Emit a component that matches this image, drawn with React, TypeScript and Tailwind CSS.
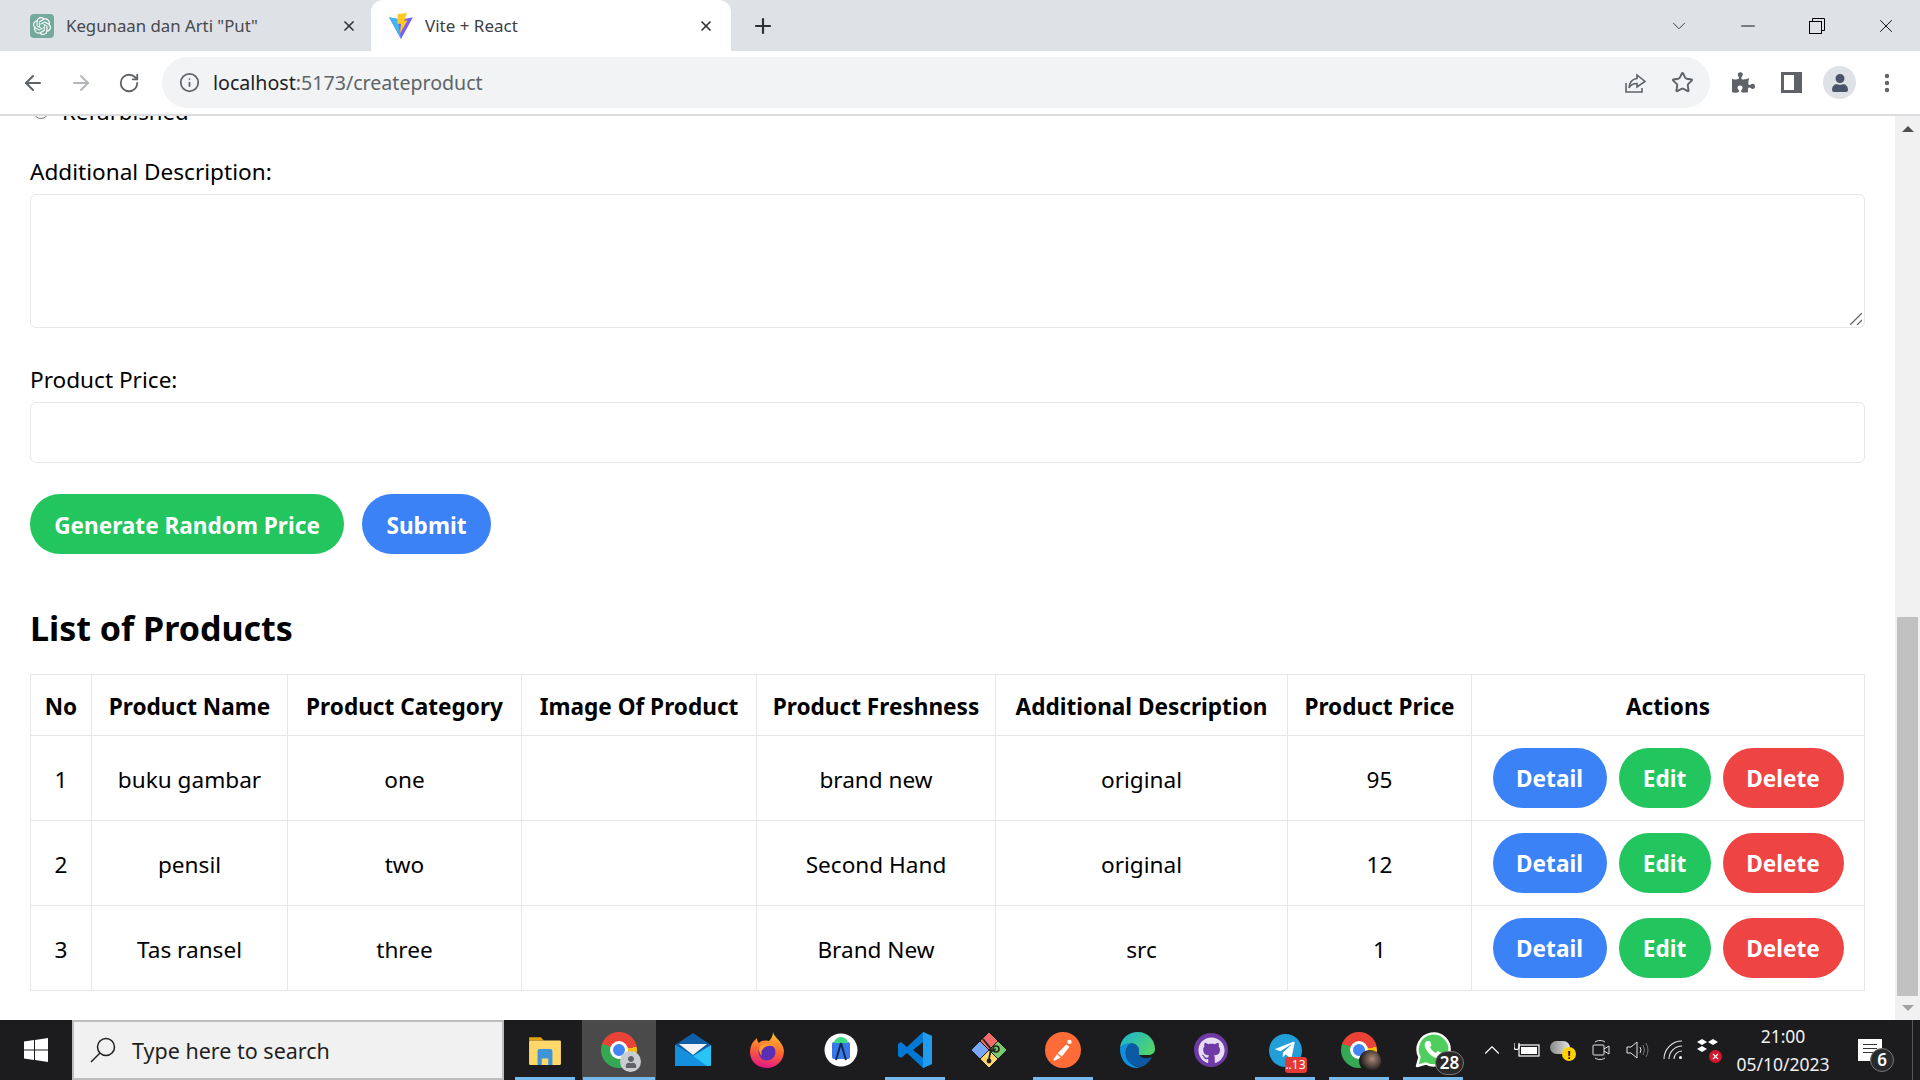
import {
  ArrowLeft,
  ArrowRight,
  ChevronDown,
  ChevronUp,
  EllipsisVertical,
  Info,
  Minus,
  Plus,
  RotateCw,
  Star,
  X,
} from 'lucide-react'
import { FaGithub, FaPuzzlePiece, FaTelegramPlane, FaUser } from 'react-icons/fa'
import { SiOpenai } from 'react-icons/si'

const font = "font-['Noto_Sans','Open_Sans',sans-serif]"

const products = [
  { no: 1, name: 'buku gambar', category: 'one', fresh: 'brand new', desc: 'original', price: 95 },
  { no: 2, name: 'pensil', category: 'two', fresh: 'Second Hand', desc: 'original', price: 12 },
  { no: 3, name: 'Tas ransel', category: 'three', fresh: 'Brand New', desc: 'src', price: 1 },
]

const headers = [
  'No',
  'Product Name',
  'Product Category',
  'Image Of Product',
  'Product Freshness',
  'Additional Description',
  'Product Price',
  'Actions',
]

const ViteLogo = () => (
  <svg viewBox="0 0 24 24" className="h-[26px] w-[26px]">
    <path d="M1 4 9 5.5 15 5.5 23 4 12 24Z" fill="#7c5cf6" />
    <path d="M1 4 9 5.5 12 24Z" fill="#41b6f5" />
    <path d="M9 1 17.5 0 15 7 18 7 11 19 12 10 8.5 10Z" fill="#ffc820" />
  </svg>
)

const ChromeLogo = () => (
  <div className="relative h-[36px] w-[36px] rounded-full bg-[conic-gradient(from_-70deg,#ea4335_0deg_150deg,#fbbc04_150deg_240deg,#34a853_240deg_360deg)]">
    <div className="absolute left-[9px] top-[9px] h-[18px] w-[18px] rounded-full border-[3px] border-white bg-[#4285f4]" />
  </div>
)

const TaskIcon = ({ active, selected, children }: { active?: boolean; selected?: boolean; children: React.ReactNode }) => (
  <div className={`relative flex h-[60px] w-[74px] items-center justify-center ${selected ? 'bg-[#4a4a4a]' : ''}`}>
    {children}
    {active && (
      <div className={`absolute bottom-0 h-[3px] bg-[#76b9ed] ${selected ? 'left-[1px] right-[1px]' : 'left-[7px] right-[7px]'}`} />
    )}
  </div>
)

function BrowserChrome() {
  return (
    <div className={`shrink-0 ${font}`}>
      <div className="flex h-[51px] items-center bg-[#dee1e6]">
        <div className="flex h-full w-[371px] items-center pl-[30px] pr-[14px]">
          <div className="flex h-[24px] w-[24px] items-center justify-center rounded-[4px] bg-[#74aa9c]">
            <SiOpenai className="h-[18px] w-[18px] text-white" />
          </div>
          <span className="ml-[12px] flex-1 text-[16.8px] text-[#45494d]">Kegunaan dan Arti "Put"</span>
          <X className="h-[16px] w-[16px] text-[#303134]" strokeWidth={2.5} />
        </div>
        <div className="flex h-full w-[360px] items-center rounded-t-[12px] bg-white pl-[17px] pr-[17px]">
          <ViteLogo />
          <span className="ml-[11px] flex-1 text-[17px] text-[#3c4043]">Vite + React</span>
          <X className="h-[16px] w-[16px] text-[#303134]" strokeWidth={2.5} />
        </div>
        <Plus className="ml-[20px] h-[24px] w-[24px] text-[#303134]" strokeWidth={2.2} />
        <div className="ml-auto flex items-center">
          <ChevronDown className="mr-[47px] h-[22px] w-[22px] text-[#303134]" strokeWidth={1} />
          <Minus className="mr-[50px] h-[22px] w-[22px] text-black" strokeWidth={1} />
          <svg viewBox="0 0 16 16" className="mr-[50px] h-[16px] w-[16px]" fill="none" stroke="black">
            <rect x="0.5" y="3.5" width="12" height="12" />
            <path d="M3.5 3.5V.5H15.5V12.5H12.5" />
          </svg>
          <X className="mr-[23px] h-[22px] w-[22px] text-black" strokeWidth={1} />
        </div>
      </div>
      <div className="flex h-[65px] items-center border-b-2 border-[#dadce0] bg-white">
        <ArrowLeft className="ml-[21px] h-[24px] w-[24px] text-[#5f6368]" strokeWidth={2} />
        <ArrowRight className="ml-[24px] h-[24px] w-[24px] text-[#b4b7bb]" strokeWidth={2} />
        <RotateCw className="ml-[25px] h-[22px] w-[22px] text-[#5f6368]" strokeWidth={2} />
        <div className="ml-[22px] flex h-[51px] w-[1548px] items-center rounded-full bg-[#f1f3f4] pl-[17px] pr-[16px]">
          <Info className="h-[21px] w-[21px] text-[#5f6368]" strokeWidth={2} />
          <span className="ml-[13px] text-[19.6px] leading-none text-[#202124]">
            localhost<span className="text-[#5f6368]">:5173/createproduct</span>
          </span>
          <svg viewBox="0 0 24 24" className="ml-auto h-[24px] w-[24px]" fill="none" stroke="#5f6368" strokeWidth="1.6">
            <path d="M3 12V21H19V17" />
            <path d="M14 4 22 10.5 14 16V12.5C10 12.5 7.5 14 6 17 6.5 11.5 9.5 8 14 7.5Z" />
          </svg>
          <Star className="ml-[24px] h-[23px] w-[23px] text-[#5f6368]" strokeWidth={2} />
        </div>
        <FaPuzzlePiece className="ml-[22px] h-[23px] w-[23px] text-[#5f6368]" />
        <div className="ml-[26px] flex h-[21px] w-[21px] justify-start border-[3px] border-r-[8px] border-[#5f6368] bg-white" />
        <div className="ml-[21px] flex h-[33px] w-[33px] items-center justify-center rounded-full bg-[#dee1e6]">
          <FaUser className="h-[18px] w-[18px] text-[#4a5468]" />
        </div>
        <EllipsisVertical className="ml-[19px] h-[24px] w-[24px] text-[#5f6368]" strokeWidth={2.4} />
      </div>
    </div>
  )
}

function ProductForm() {
  return (
    <div>
      <div className="-mt-[23px] flex h-[36px] items-center">
        <div className="ml-[3px] h-[16px] w-[16px] rounded-full border border-[#767676]" />
        <span className="ml-[13px] pt-[2px] text-[22.2px] text-black">Refurbished</span>
      </div>
      <label className="mt-[25px] block h-[36px] text-[22.6px] leading-[36px] text-black">Additional Description:</label>
      <div className="relative mt-[4px]">
        <textarea className="block h-[134px] w-full resize-none rounded-[6px] border border-[#e5e7eb] bg-white" />
        <svg viewBox="0 0 12 12" className="absolute bottom-[3px] right-[3px] h-[12px] w-[12px]" fill="none" stroke="#666" strokeWidth="1.3">
          <path d="M0 12 12 0M7 12 12 7" />
        </svg>
      </div>
      <label className="mt-[34px] block h-[36px] text-[22.6px] leading-[36px] text-black">Product Price:</label>
      <input className="mt-[4px] block h-[61px] w-full rounded-[6px] border border-[#e5e7eb] bg-white" />
      <div className="mt-[31px] flex gap-[18px]">
        <button className="h-[60px] w-[314px] rounded-full bg-[#22c55e] pt-[3px] text-[22.6px] font-bold text-white">Generate Random Price</button>
        <button className="h-[60px] w-[129px] rounded-full bg-[#3b82f6] pt-[3px] text-[22.6px] font-bold text-white">Submit</button>
      </div>
    </div>
  )
}

function ProductTable() {
  return (
    <div>
      <h2 className="mt-[46px] text-[34px] font-bold leading-[56px] text-black">List of Products</h2>
      <table className="mt-[18px] w-[1834px] table-fixed border-collapse text-center text-[22.6px] text-black">
        <colgroup>
          <col className="w-[61px]" />
          <col className="w-[196px]" />
          <col className="w-[234px]" />
          <col className="w-[235px]" />
          <col className="w-[239px]" />
          <col className="w-[292px]" />
          <col className="w-[184px]" />
          <col className="w-[393px]" />
        </colgroup>
        <thead>
          <tr className="h-[61px]">
            {headers.map((h) => (
              <th key={h} className="border border-[#e5e7eb] p-0 pt-[4px] font-bold whitespace-nowrap">
                {h}
              </th>
            ))}
          </tr>
        </thead>
        <tbody>
          {products.map((p) => (
            <tr key={p.no} className="h-[85px]">
              <td className="border border-[#e5e7eb] p-0 pt-[4px]">{p.no}</td>
              <td className="border border-[#e5e7eb] p-0 pt-[4px]">{p.name}</td>
              <td className="border border-[#e5e7eb] p-0 pt-[4px]">{p.category}</td>
              <td className="border border-[#e5e7eb] p-0"></td>
              <td className="border border-[#e5e7eb] p-0 pt-[4px]">{p.fresh}</td>
              <td className="border border-[#e5e7eb] p-0 pt-[4px]">{p.desc}</td>
              <td className="border border-[#e5e7eb] p-0 pt-[4px]">{p.price}</td>
              <td className="border border-[#e5e7eb] p-0">
                <div className="flex justify-center gap-[12px]">
                  <button className="h-[60px] w-[114px] rounded-full bg-[#3b82f6] pt-[2px] font-bold text-white">Detail</button>
                  <button className="h-[60px] w-[92px] rounded-full bg-[#22c55e] pt-[2px] font-bold text-white">Edit</button>
                  <button className="h-[60px] w-[121px] rounded-full bg-[#ef4444] pt-[2px] font-bold text-white">Delete</button>
                </div>
              </td>
            </tr>
          ))}
        </tbody>
      </table>
    </div>
  )
}

function Taskbar() {
  return (
    <div className={`relative flex h-[60px] shrink-0 items-center bg-[#1c1c1e] text-white ${font}`}>
      <div className="flex h-full w-[72px] items-center justify-center">
        <svg viewBox="0 0 24 24" className="h-[24px] w-[24px]" fill="white">
          <path d="M0 3.5 10 2V11.5H0ZM11 1.9 24 0V11.5H11ZM0 12.5H10V22L0 20.5ZM11 12.5H24V24L11 22.1Z" />
        </svg>
      </div>
      <div className="flex h-full w-[432px] items-center border-2 border-[#bdbdbd] bg-[#f1f1f1] pl-[16px] text-[#1f1f1f]">
        <svg viewBox="0 0 26 26" className="h-[26px] w-[26px]" fill="none" stroke="#1f1f1f" strokeWidth="1.5">
          <circle cx="16" cy="10" r="8.5" />
          <path d="M10 16 1 25" />
        </svg>
        <span className="ml-[16px] pt-[3px] text-[21.5px]">Type here to search</span>
      </div>
      <div className="ml-[4px] flex">
        <TaskIcon active>
          <svg viewBox="0 0 32 32" className="h-[34px] w-[34px]">
            <path d="M1 4H12L15 7H1Z" fill="#e0a30d" />
            <rect x="1" y="7" width="30" height="23" rx="1" fill="#ffd869" />
            <path d="M9 17Q9 15 11 15H21Q23 15 23 17V30H19V24H13V30H9Z" fill="#3f95d8" />
          </svg>
        </TaskIcon>
        <TaskIcon active selected>
          <div className="relative">
            <ChromeLogo />
            <div className="absolute -bottom-[4px] -right-[4px] flex h-[21px] w-[21px] items-center justify-center rounded-full bg-[#c9ccd1]">
              <FaUser className="h-[12px] w-[12px] text-[#5f6368]" />
            </div>
          </div>
        </TaskIcon>
        <TaskIcon>
          <svg viewBox="0 0 36 36" className="h-[36px] w-[36px]">
            <path d="M0 13 18 1 36 13 18 26Z" fill="#0f5fa8" />
            <path d="M4 12H32L18 23Z" fill="#f2f2f2" />
            <path d="M0 13 18 24 36 13V33Q36 34 35 34H1Q0 34 0 33Z" fill="#28c4f6" />
            <path d="M0 13 18 24 32 34H1Q0 34 0 33Z" fill="#1490df" />
          </svg>
        </TaskIcon>
        <TaskIcon>
          <svg viewBox="0 0 36 36" className="h-[36px] w-[36px]">
            <defs>
              <linearGradient id="ffx" x1="0.6" y1="0" x2="0.4" y2="1">
                <stop offset="0" stopColor="#ffc22e" />
                <stop offset="0.5" stopColor="#ff6a2f" />
                <stop offset="1" stopColor="#e31587" />
              </linearGradient>
            </defs>
            <path d="M24 0C25 6 34 9 35 19 35 29 27 36 18 36 8 36 1 29 1 20 1 15 3 11 5 9 6 8 7 7 8 6 8 9 9 10 10 11 13 8 18 8 20 9 23 6 24 3 24 0Z" fill="url(#ffx)" />
            <circle cx="18" cy="20" r="8.5" fill="#5b2fb5" />
            <path d="M11 14C15 10 24 10 27 16 24 13 17 13 14 17 12 19 12 21 13 24 10 21 9 17 11 14Z" fill="#ff9a2e" />
          </svg>
        </TaskIcon>
        <TaskIcon>
          <svg viewBox="0 0 36 36" className="h-[36px] w-[36px]">
            <circle cx="18" cy="18" r="16.5" fill="white" />
            <rect x="9" y="10" width="18" height="17" rx="2" fill="#3a78e7" />
            <path d="M11 11A7 6 0 0 1 25 11Z" fill="#3ddc84" />
            <path d="M18 11 13 28M18 11 23 28" stroke="#0d2b50" strokeWidth="2" fill="none" />
          </svg>
        </TaskIcon>
        <TaskIcon active>
          <svg viewBox="0 0 36 36" className="h-[36px] w-[36px]">
            <path d="M26 0 35 4V32L26 36 10 21 4 26 1 24V12L4 10 10 15Z" fill="#0078d4" />
            <path d="M26 0 35 4V32L26 36Z" fill="#1f9cf0" />
            <path d="M26 10 16 18 26 26Z" fill="#1c1c1e" />
          </svg>
        </TaskIcon>
        <TaskIcon>
          <svg viewBox="0 0 36 36" className="h-[36px] w-[36px]">
            <path d="M18 1 26 9 18 17 10 9Z" fill="#f16b6b" stroke="#f16b6b" strokeLinejoin="round" strokeWidth="1" />
            <path d="M9 10 17 18 9 26 1 18Z" fill="#7aa7f7" stroke="#7aa7f7" strokeLinejoin="round" strokeWidth="1" />
            <path d="M27 10 35 18 27 26 19 18Z" fill="#7bc86c" stroke="#7bc86c" strokeLinejoin="round" strokeWidth="1" />
            <path d="M18 19 26 27 18 35 10 27Z" fill="#ffd76a" stroke="#ffd76a" strokeLinejoin="round" strokeWidth="1" />
            <path d="M12 7 20 17 18 27M25 17 19 20" stroke="#222" strokeWidth="1.8" fill="none" />
            <circle cx="25" cy="17" r="3" fill="none" stroke="#222" strokeWidth="1.6" />
            <circle cx="18" cy="29" r="2.4" fill="#222" />
          </svg>
        </TaskIcon>
        <TaskIcon active>
          <div className="flex h-[36px] w-[36px] items-center justify-center rounded-full bg-[#ff6c37]">
            <svg viewBox="0 0 24 24" className="h-[26px] w-[26px]" fill="white">
              <circle cx="18" cy="4.5" r="2" />
              <path d="M15 7 18 9 11 18 7 15ZM6.5 16 10 19 4 22 3 21Z" />
            </svg>
          </div>
        </TaskIcon>
        <TaskIcon>
          <svg viewBox="0 0 36 36" className="h-[36px] w-[36px]">
            <defs>
              <linearGradient id="edg" x1="0" y1="0" x2="1" y2="0.6">
                <stop offset="0" stopColor="#1bb1d8" />
                <stop offset="1" stopColor="#4fd36e" />
              </linearGradient>
            </defs>
            <path d="M1 17C1 7 9 0 19 0 29 0 36 8 36 17 36 21 33 23 29 23H19C20 16 16 12 11 12 6 12 1 14 1 17Z" fill="url(#edg)" />
            <path d="M1 17C1 14 6 11 12 11 8 14 6 18 7 23 8 30 15 35 22 36 20 36 19 36 18 36 8 36 1 28 1 17Z" fill="#0f8fdc" />
            <path d="M12 11C17 11 21 15 20 20 19 25 26 28 33 25 29 32 24 35 21 35 13 34 7 29 7 23 6 18 8 14 12 11Z" fill="#0c59a4" />
          </svg>
        </TaskIcon>
        <TaskIcon>
          <div className="flex h-[34px] w-[34px] items-center justify-center rounded-full bg-[#6f3aa5]">
            <FaGithub className="h-[27px] w-[27px] text-[#e8def3]" />
          </div>
        </TaskIcon>
        <TaskIcon active>
          <div className="relative flex h-[33px] w-[33px] items-center justify-center rounded-full bg-[#229ed9]">
            <FaTelegramPlane className="h-[22px] w-[22px] text-white" />
            <span className="absolute -bottom-[6px] -right-[5px] flex h-[16px] w-[22px] items-center justify-center rounded-[3px] bg-[#e53935] text-[12px] leading-none text-white">..13</span>
          </div>
        </TaskIcon>
        <TaskIcon active>
          <div className="relative">
            <ChromeLogo />
            <div className="absolute -bottom-[4px] -right-[4px] h-[22px] w-[22px] rounded-full bg-[radial-gradient(circle_at_60%_40%,#b08a78,#1b1b1b_65%)]" />
          </div>
        </TaskIcon>
        <TaskIcon active>
          <div className="relative">
            <svg viewBox="0 0 36 36" className="h-[36px] w-[36px]">
              <path d="M2 34 4.5 25A16 16 0 1 1 11 31.5Z" fill="#4fce5d" stroke="white" strokeWidth="2.4" strokeLinejoin="round" />
              <path d="M12 9C10 10 9 12 10 15 12 20 16 24 21 26 24 27 26 26 27 23L27 21 22.5 19 21 21C18.5 20 16 17.5 15 15L16.5 13.5 15 9Z" fill="white" />
            </svg>
            <span className="absolute -bottom-[7px] -right-[13px] flex h-[24px] w-[29px] items-center justify-center rounded-full border border-[#777] bg-[#2a2a2a] text-[17px] font-semibold">28</span>
          </div>
        </TaskIcon>
      </div>
      <ChevronUp className="ml-[9px] h-[26px] w-[26px] text-white" strokeWidth={1} />
      <svg viewBox="0 0 26 16" className="ml-[9px] h-[16px] w-[26px]" fill="none" stroke="white" strokeWidth="1.2">
        <rect x="5" y="3" width="20" height="11" />
        <path d="M0 1V5A2 2 0 0 0 5 5V1" />
        <rect x="7" y="5" width="16" height="7" fill="white" stroke="none" />
      </svg>
      <div className="relative ml-[10px] h-[18px] w-[24px]">
        <div className="h-[13px] w-[20px] rounded-full bg-[linear-gradient(90deg,#8a8a8a,#e4e4e4)]" />
        <div className="absolute -bottom-[2px] -right-[2px] flex h-[14px] w-[14px] items-center justify-center rounded-full bg-[#ffd400] text-[11px] font-bold leading-none text-black">!</div>
      </div>
      <svg viewBox="0 0 18 22" className="ml-[18px] h-[22px] w-[18px]" fill="none" stroke="#e4e4e4" strokeWidth="1">
        <rect x="1" y="6" width="11" height="10" rx="1" />
        <path d="M12 10 17 7V15L12 12M3 3C6 1 10 1 13 3M3 19C6 21 10 21 13 19" />
      </svg>
      <svg viewBox="0 0 24 22" className="ml-[16px] h-[22px] w-[24px]" fill="none" stroke="#e4e4e4" strokeWidth="1">
        <path d="M1 8H5L11 3V19L5 14H1Z" />
        <path d="M14 8Q16 11 14 14" />
        <path d="M17 6Q20 11 17 16M20 4Q24 11 20 18" stroke="#777" />
      </svg>
      <svg viewBox="0 0 20 20" className="ml-[13px] h-[20px] w-[20px]" fill="none" stroke="#e4e4e4" strokeWidth="1.1">
        <path d="M1 19A18 18 0 0 1 19 1M6 19A13 13 0 0 1 19 6" />
        <path d="M11 19A8 8 0 0 1 19 11" />
        <circle cx="17.5" cy="17.5" r="1.5" fill="white" stroke="none" />
      </svg>
      <div className="relative ml-[14px] h-[22px] w-[22px]">
        <svg viewBox="0 0 22 16" className="h-[16px] w-[22px]" fill="white">
          <path d="M5 0 10 3 5 6 0 3ZM16 0 21 3 16 6 11 3ZM5 7 10 10 5 13 0 10Z" />
        </svg>
        <div className="absolute -bottom-[2px] right-[-3px] flex h-[13px] w-[13px] items-center justify-center rounded-full bg-[#d3172e]">
          <X className="h-[9px] w-[9px] text-white" strokeWidth={3} />
        </div>
      </div>
      <div className="ml-[9px] flex w-[110px] flex-col items-center text-[17.5px] leading-[28px] text-[#f2f2f2]">
        <span>21:00</span>
        <span>05/10/2023</span>
      </div>
      <div className="relative ml-[20px] h-[22px] w-[24px] bg-white">
        <div className="mx-[5px] mt-[5px] h-[1px] bg-[#333]" />
        <div className="mx-[5px] mt-[3px] h-[1px] bg-[#333]" />
        <div className="mx-[5px] mt-[3px] h-[1px] bg-[#333]" />
        <span className="absolute -bottom-[11px] -right-[12px] flex h-[24px] w-[24px] items-center justify-center rounded-full border border-[#777] bg-[#2a2a2a] text-[17px] font-semibold">6</span>
      </div>
      <div className="absolute bottom-0 right-[7px] top-0 w-[1px] bg-[#555]" />
    </div>
  )
}

export default function App() {
  return (
    <div className="flex h-screen w-[1920px] flex-col overflow-hidden bg-white">
      <BrowserChrome />
      <div className="flex min-h-0 flex-1">
        <main className={`flex-1 overflow-hidden px-[30px] ${font}`}>
          <ProductForm />
          <ProductTable />
        </main>
        <div className="flex w-[25px] shrink-0 flex-col items-center bg-[#f1f1f1]">
          <div className="mt-[10px] h-0 w-0 border-x-[6px] border-b-[6px] border-x-transparent border-b-[#505050]" />
          <div className="mt-[485px] h-[379px] w-[21px] bg-[#c1c1c1]" />
          <div className="mt-[9px] h-0 w-0 border-x-[6px] border-t-[6px] border-x-transparent border-t-[#a3a3a3]" />
        </div>
      </div>
      <Taskbar />
    </div>
  )
}
